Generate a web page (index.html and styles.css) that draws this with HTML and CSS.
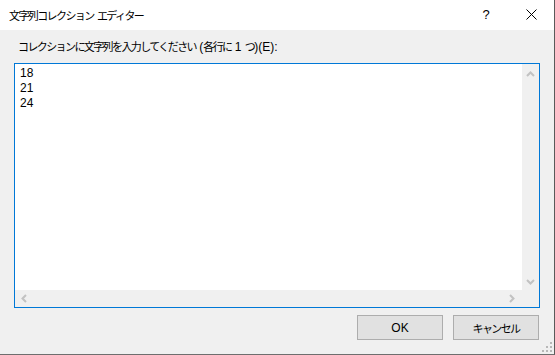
FILE: index.html
```html
<!DOCTYPE html>
<html lang="ja">
<head>
    <meta charset="UTF-8">
    <title>文字列コレクション エディター</title>
    <link rel="stylesheet" href="styles.css">
</head>
<body>
    <div class="window">
        <div class="titlebar">
            <span class="title"><span class="jp">文字列コレクション</span> <span class="jp">エディター</span></span>
            <div class="caption-btn help">?</div>
            <div class="caption-btn close">
                <svg width="11" height="11" viewBox="0 0 11 11"><path d="M0.5 0.5 L10.5 10.5 M10.5 0.5 L0.5 10.5" stroke="#000" stroke-width="1" fill="none"/></svg>
            </div>
        </div>
        <div class="content">
            <div class="label"><span class="jp">コレクションに文字列を入力してください</span> (<span class="jp">各行に</span> 1 <span class="jp">つ</span>)(E):</div>
            <div class="editor">
                <div class="lines">
                    <div>18</div>
                    <div>21</div>
                    <div>24</div>
                </div>
                <div class="vscroll">
                    <svg width="9" height="6" viewBox="0 0 9 6"><path d="M1 5 L4.5 1.5 L8 5" stroke="#c2c2c2" stroke-width="2" fill="none"/></svg>
                    <svg width="9" height="6" viewBox="0 0 9 6"><path d="M1 1 L4.5 4.5 L8 1" stroke="#c2c2c2" stroke-width="2" fill="none"/></svg>
                </div>
                <div class="hscroll">
                    <svg width="6" height="9" viewBox="0 0 6 9"><path d="M5 1 L1.5 4.5 L5 8" stroke="#c2c2c2" stroke-width="2" fill="none"/></svg>
                    <svg width="6" height="9" viewBox="0 0 6 9"><path d="M1 1 L4.5 4.5 L1 8" stroke="#c2c2c2" stroke-width="2" fill="none"/></svg>
                </div>
                <div class="corner"></div>
            </div>
            <div class="buttons">
                <div class="btn">OK</div>
                <div class="btn"><span class="jp">キャンセル</span></div>
            </div>
        </div>
        <svg class="grip" width="11" height="11" viewBox="0 0 11 11">
            <rect x="8" y="0" width="2" height="2" fill="#b8b8b8"/>
            <rect x="4" y="4" width="2" height="2" fill="#b8b8b8"/>
            <rect x="8" y="4" width="2" height="2" fill="#b8b8b8"/>
            <rect x="0" y="8" width="2" height="2" fill="#b8b8b8"/>
            <rect x="4" y="8" width="2" height="2" fill="#b8b8b8"/>
            <rect x="8" y="8" width="2" height="2" fill="#b8b8b8"/>
        </svg>
    </div>
</body>
</html>
```

FILE: styles.css
```css
body {
    margin: 0;
    padding: 0;
    font-family: "Liberation Sans", "Noto Sans CJK JP", sans-serif;
    font-size: 12px;
    color: #000;
    background: #f0f0f0;
}
.jp {
    font-size: 11px;
    letter-spacing: -1.6px;
}
.window {
    position: relative;
    width: 554px;
    height: 354px;
    background: #f0f0f0;
    border-right: 1px solid #5a5a5a;
    border-bottom: 1px solid #6e6e6e;
    display: flex;
    flex-direction: column;
}
.titlebar {
    height: 30px;
    background: #fff;
    display: flex;
    align-items: center;
}
.title {
    flex: 1;
    padding-left: 9px;
    font-size: 12px;
    padding-bottom: 1px;
}
.caption-btn {
    width: 46px;
    height: 30px;
    display: flex;
    align-items: center;
    justify-content: center;
}
.help {
    font-size: 13px;
    margin-right: -1px;
    padding-bottom: 1px;
}
.close {
    padding-bottom: 2px;
}
.content {
    padding: 9px 14px 0 14px;
    display: flex;
    flex-direction: column;
}
.label {
    height: 16px;
    line-height: 16px;
    padding-left: 4px;
    margin-bottom: 8px;
}
.editor {
    width: 524px;
    height: 243px;
    border: 1px solid #0078d7;
    background: #fff;
    display: grid;
    grid-template-columns: 1fr 17px;
    grid-template-rows: 1fr 17px;
}
.lines {
    padding: 2px 5px;
    line-height: 15px;
    font-size: 12px;
}
.vscroll {
    background: #f0f0f0;
    display: flex;
    flex-direction: column;
    justify-content: space-between;
    align-items: center;
    padding: 7px 0 5px;
}
.hscroll {
    background: #f0f0f0;
    display: flex;
    justify-content: space-between;
    align-items: center;
    padding: 0 7px 0 6px;
}
.corner {
    background: #f0f0f0;
}
.buttons {
    display: flex;
    justify-content: flex-end;
    gap: 10px;
    margin-top: 7px;
    padding-right: 1px;
}
.btn {
    width: 84px;
    height: 23px;
    background: #e1e1e1;
    border: 1px solid #adadad;
    display: flex;
    align-items: center;
    justify-content: center;
}
.grip {
    position: absolute;
    right: 1px;
    bottom: 1px;
}
```
